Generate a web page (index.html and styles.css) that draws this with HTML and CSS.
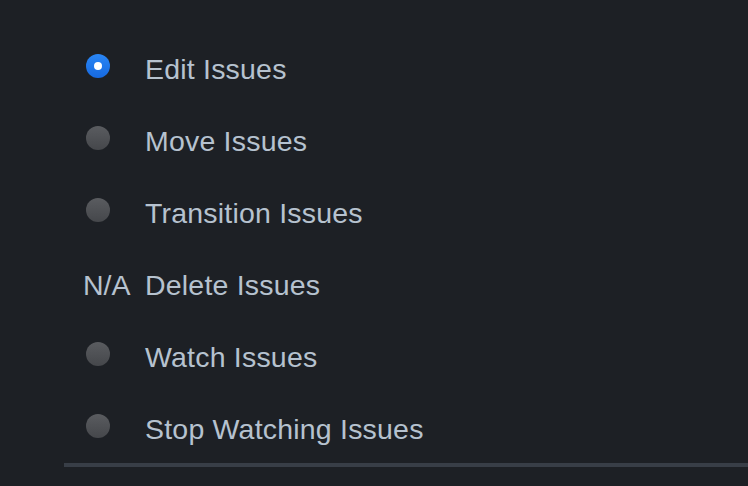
FILE: index.html
```html
<!DOCTYPE html>
<html lang="en">
<head>
    <meta charset="utf-8">
    <meta name="viewport" content="width=device-width, initial-scale=1">
    <title>Issue actions</title>
    <link rel="stylesheet" href="styles.css">
</head>
<body>
    <div class="panel">
        <ul class="options">
            <li class="option"><span class="mark"><span class="radio checked"></span></span><span class="label">Edit Issues</span></li>
            <li class="option"><span class="mark"><span class="radio"></span></span><span class="label">Move Issues</span></li>
            <li class="option"><span class="mark"><span class="radio"></span></span><span class="label">Transition Issues</span></li>
            <li class="option"><span class="mark na">N/A</span><span class="label">Delete Issues</span></li>
            <li class="option"><span class="mark"><span class="radio"></span></span><span class="label">Watch Issues</span></li>
            <li class="option"><span class="mark"><span class="radio"></span></span><span class="label">Stop Watching Issues</span></li>
        </ul>
    </div>
</body>
</html>
```

FILE: styles.css
```css
body {
    margin: 0;
    background: #1d2025;
    color: #b6c2cf;
    font-family: "Liberation Sans", Arial, sans-serif;
}

.panel {
    margin-left: 64px;
    padding-top: 30px;
    border-bottom: 4px solid #383e47;
}

.options {
    list-style: none;
    margin: 0;
    padding: 0 0 1px 19px;
}

.option {
    display: flex;
    align-items: center;
    height: 72px;
    font-size: 28.5px;
    letter-spacing: 0.2px;
}

.mark {
    width: 62px;
    flex-shrink: 0;
    display: flex;
    align-items: center;
}

.mark.na {
    display: block;
    margin-top: 6px;
    letter-spacing: 0;
}

.radio {
    display: block;
    width: 24px;
    height: 24px;
    margin-left: 3px;
    border-radius: 50%;
    background: linear-gradient(#5a5c60, #45474b);
}

.radio.checked {
    position: relative;
    background: linear-gradient(#2a86f5, #1669e0);
}

.radio.checked::after {
    content: "";
    position: absolute;
    left: 8px;
    top: 8px;
    width: 8px;
    height: 8px;
    border-radius: 50%;
    background: #fff;
}

.label {
    margin-top: 6px;
    white-space: nowrap;
}
```
